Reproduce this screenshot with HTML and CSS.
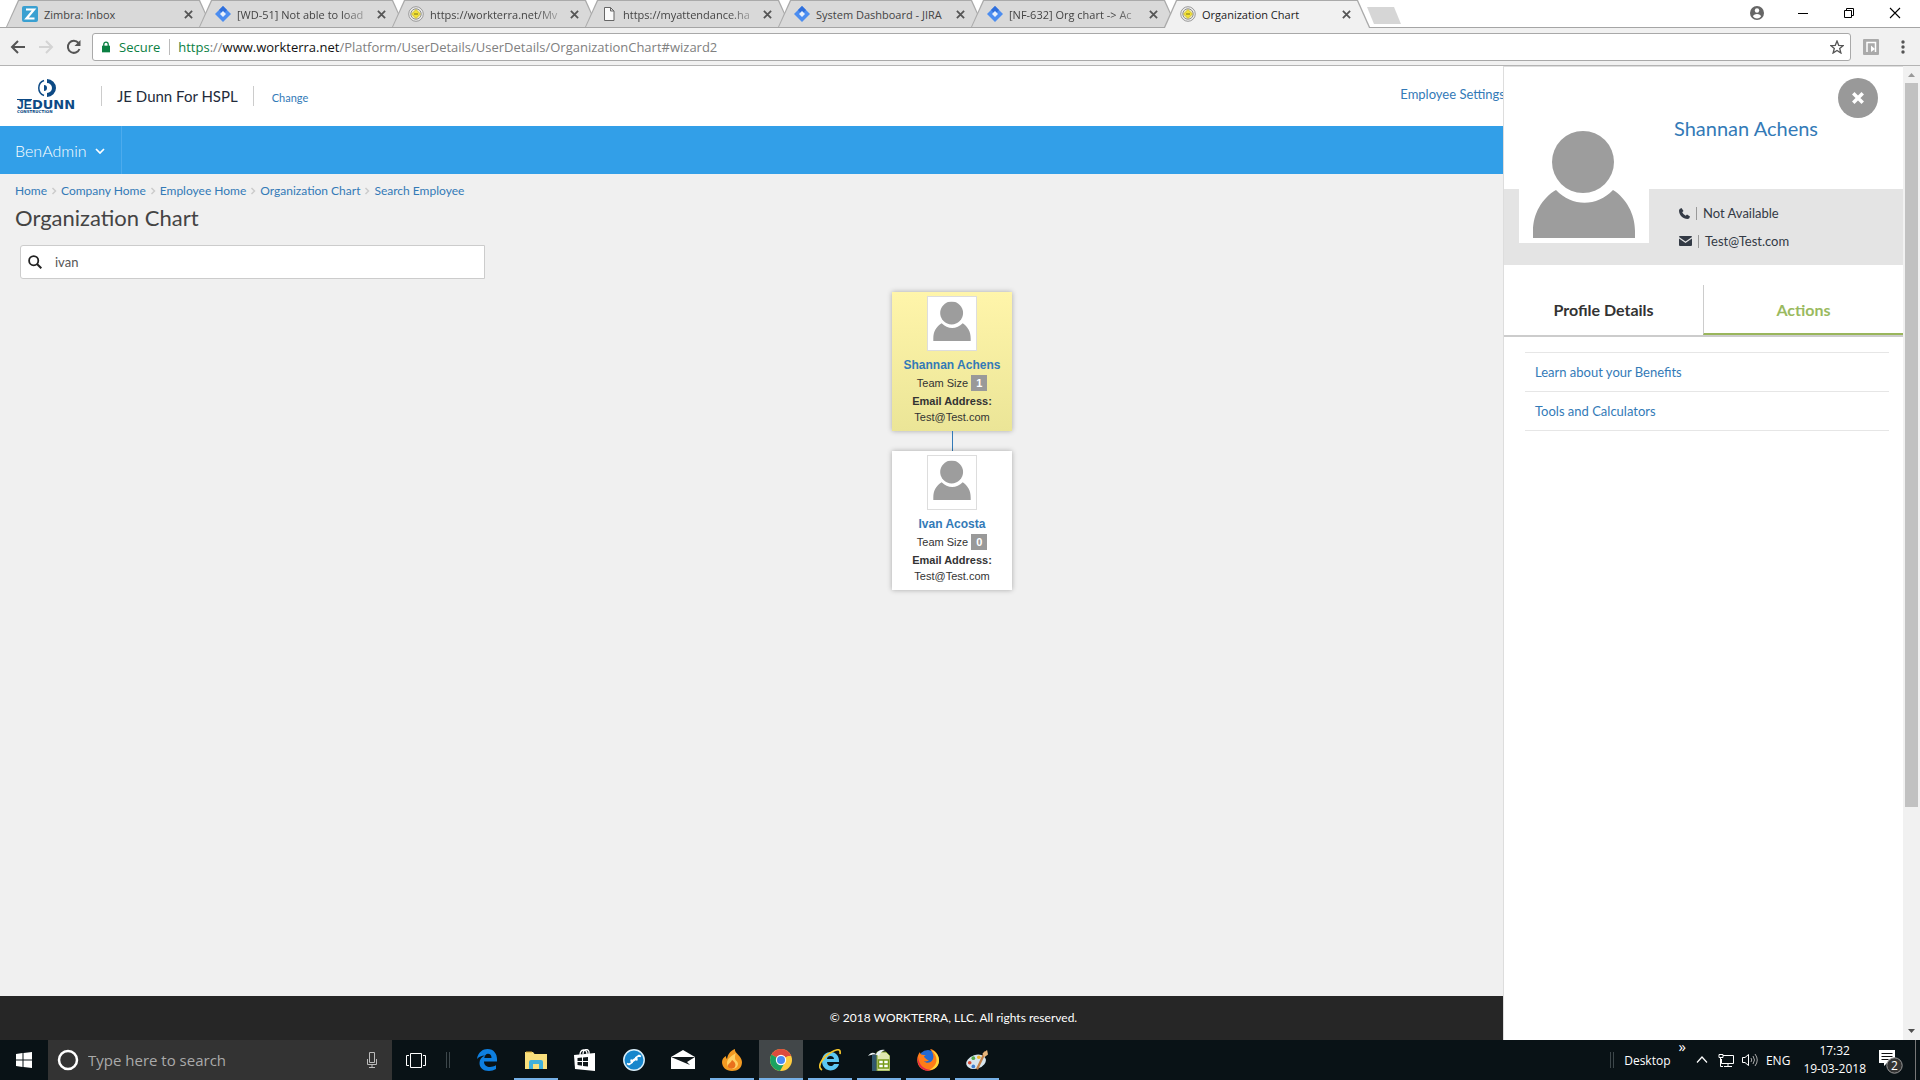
FILE: index.html
```html
<!DOCTYPE html>
<html lang="en">
<head>
<meta charset="utf-8">
<title>Organization Chart</title>
<link rel="stylesheet" href="styles.css">
</head>
<body>
<svg class="defs" aria-hidden="true">
  <symbol id="jira" viewBox="0 0 16 16"><path d="M8 0l8 8-8 8-8-8z" fill="#4c8df0"/><path d="M8 0l4 4-4 4-4-4z" fill="#2f6fdc"/><path d="M8 5l3 3-3 3-3-3z" fill="#e8f0fc"/></symbol>
  <symbol id="wt" viewBox="0 0 16 16"><circle cx="8" cy="8" r="7.3" fill="#eee" stroke="#999" stroke-width="1"/><circle cx="8" cy="8" r="5.2" fill="#f4efc0" stroke="#8d8d8d"/><path d="M8 3.500l4.500 4.500-4.500 4.500L3.500 8z" fill="#f3e233" stroke="#b5a52a" stroke-width=".6"/><path d="M6 8h4" stroke="#77701e"/></symbol>
  <symbol id="doc" viewBox="0 0 16 16"><path d="M3.500 1.500h6l3.500 3.500v9.500H3.500zM9.500 1.500V5H13" fill="#fafafa" stroke="#666"/></symbol>
  <symbol id="x" viewBox="0 0 10 10"><path d="M1 1l8 8M9 1L1 9" stroke="#555" stroke-width="2"/></symbol>
  <symbol id="person" viewBox="0 0 102 107"><circle cx="50" cy="31" r="31" fill="#9d9d9d"/><path d="M0 107V100C0 83 9 67 23 59C39 76 64 76 80 59C93 67 102 83 102 100V107z" fill="#9d9d9d"/></symbol>
  <symbol id="crumb" viewBox="0 0 6 8"><path d="M1.500 1l3 3-3 3" fill="none" stroke="#ccc" stroke-width="1.500"/></symbol>
</svg>

<header class="browser">
  <div class="tabstrip">
    <div class="tab"><svg viewBox="0 0 16 16"><rect width="16" height="16" rx="2" fill="#3aa0d1"/><path d="M4 3.500h8L4.500 12.500H12.500" fill="none" stroke="#fff" stroke-width="2.200"/></svg><span>Zimbra: Inbox</span><button aria-label="Close tab"><svg><use href="#x"/></svg></button></div>
    <div class="tab"><svg><use href="#jira"/></svg><span class="fade">[WD-51] Not able to load</span><button aria-label="Close tab"><svg><use href="#x"/></svg></button></div>
    <div class="tab"><svg><use href="#wt"/></svg><span class="fade">https://workterra.net/Mv</span><button aria-label="Close tab"><svg><use href="#x"/></svg></button></div>
    <div class="tab"><svg><use href="#doc"/></svg><span class="fade">https://myattendance.ha</span><button aria-label="Close tab"><svg><use href="#x"/></svg></button></div>
    <div class="tab"><svg><use href="#jira"/></svg><span>System Dashboard - JIRA</span><button aria-label="Close tab"><svg><use href="#x"/></svg></button></div>
    <div class="tab"><svg><use href="#jira"/></svg><span class="fade">[NF-632] Org chart -&gt; Ac</span><button aria-label="Close tab"><svg><use href="#x"/></svg></button></div>
    <div class="tab active"><svg><use href="#wt"/></svg><span>Organization Chart</span><button aria-label="Close tab"><svg><use href="#x"/></svg></button></div>
    <button class="newtab" aria-label="New tab"></button>
    <div class="winbtns">
      <button aria-label="Profile"><svg viewBox="0 0 14 14"><circle cx="7" cy="7" r="7" fill="#666"/><circle cx="7" cy="4.500" r="2.200" fill="#fff"/><path d="M3 10.500c0-3.500 8-3.500 8 0a5 5 0 0 1-8 0" fill="#fff"/></svg></button>
      <button aria-label="Minimize"><svg viewBox="0 0 14 14"><path d="M2 7.500h10" stroke="#000"/></svg></button>
      <button aria-label="Restore"><svg viewBox="0 0 14 14"><path d="M2.500 4.500h7v7h-7zM4.500 4.500v-2h7v7h-2" fill="none" stroke="#000"/></svg></button>
      <button aria-label="Close"><svg viewBox="0 0 14 14"><path d="M2 2l10 10M12 2L2 12" stroke="#000" stroke-width="1.100"/></svg></button>
    </div>
  </div>
  <div class="toolbar">
    <button aria-label="Back"><svg viewBox="0 0 16 16"><path d="M15 8H2M8 2L2 8l6 6" fill="none" stroke="#555" stroke-width="2"/></svg></button>
    <button aria-label="Forward"><svg viewBox="0 0 16 16"><path d="M1 8h13M8 2l6 6-6 6" fill="none" stroke="#d4d4d4" stroke-width="2"/></svg></button>
    <button aria-label="Reload"><svg viewBox="0 0 16 16"><path d="M13.500 10A6 6 0 1 1 12.500 4" fill="none" stroke="#555" stroke-width="2"/><path d="M14.500 1v6h-6z" fill="#555"/></svg></button>
    <div class="omnibox">
      <svg class="lock" viewBox="0 0 9 12"><path d="M0 4.500h9V12H0z" fill="#0b8043"/><path d="M2 5V3a2.500 2.500 0 0 1 5 0v2" fill="none" stroke="#0b8043" stroke-width="1.500"/></svg>
      <span class="secure">Secure</span>
      <span class="url"><i>https</i>://<b>www.workterra.net</b>/Platform/UserDetails/UserDetails/OrganizationChart#wizard2</span>
      <button aria-label="Bookmark"><svg viewBox="0 0 14 14"><path d="M7 1l1.700 4.300 4.500.3-3.500 2.900 1.200 4.500L7 10.500 3.100 13l1.200-4.500L.8 5.600l4.500-.3z" fill="none" stroke="#555" stroke-width="1.300"/></svg></button>
    </div>
    <button class="ext" aria-label="Extension"><svg viewBox="0 0 16 16"><rect width="16" height="16" rx="1" fill="#aaa"/><path d="M4 13V3.500h8.500V13" fill="none" stroke="#fff" stroke-width="1.500"/><path d="M8 6.500l4 3.500-4 3z" fill="#fff"/></svg></button>
    <button aria-label="Menu"><svg viewBox="0 0 16 16" fill="#555"><circle cx="8" cy="3" r="1.700"/><circle cx="8" cy="8" r="1.700"/><circle cx="8" cy="13" r="1.700"/></svg></button>
  </div>
</header>

<div class="viewport">
  <div class="page">
    <div class="brandbar">
      <svg class="logo" viewBox="0 0 64 34" role="img" aria-label="JE Dunn Construction">
        <path d="M28 1.500a8 8 0 0 0 0 15" fill="none" stroke="#0d4a85" stroke-width="1.500"/>
        <path d="M31 0a8.800 8.800 0 0 1 0 18v-4a5 5 0 0 0 0-10z" fill="#0d4a85"/><path d="M28 6a3 3 0 0 1 0 6z" fill="#0d4a85"/>
        <path d="M1 20.500h15" stroke="#0d4a85"/>
        <text x="1" y="30" class="logo-je">JE</text><text x="16" y="30" class="logo-dunn">DUNN</text>
        <text x="1" y="34" class="logo-sub">CONSTRUCTION</text>
      </svg>
      <span class="company">JE Dunn For HSPL</span>
      <a class="change" href="#">Change</a>
      <a class="settings" href="#">Employee Settings</a>
    </div>
    <nav class="mainnav"><button>BenAdmin <svg viewBox="0 0 10 6"><path d="M1 1l4 4 4-4" fill="none" stroke="#fff" stroke-width="1.700"/></svg></button></nav>
    <main>
      <nav class="crumbs">
        <a href="#">Home</a><svg><use href="#crumb"/></svg><a href="#">Company Home</a><svg><use href="#crumb"/></svg><a href="#">Employee Home</a><svg><use href="#crumb"/></svg><a href="#">Organization Chart</a><svg><use href="#crumb"/></svg><a href="#">Search Employee</a>
      </nav>
      <h1>Organization Chart</h1>
      <label class="search"><svg viewBox="0 0 14 14"><circle cx="5.700" cy="5.700" r="4.600" fill="none" stroke="#222" stroke-width="1.800"/><path d="M9 9l4.300 4.300" stroke="#222" stroke-width="2"/></svg><input type="text" value="ivan" aria-label="Search employee"></label>
      <div class="chart">
        <article class="card selected">
          <svg class="photo" viewBox="-14 -12 130 143"><use href="#person" width="102" height="107"/></svg>
          <a href="#">Shannan Achens</a>
          <p class="team">Team Size <span>1</span></p>
          <p><b>Email Address:</b></p>
          <p>Test@Test.com</p>
        </article>
        <div class="link"></div>
        <article class="card">
          <svg class="photo" viewBox="-14 -12 130 143"><use href="#person" width="102" height="107"/></svg>
          <a href="#">Ivan Acosta</a>
          <p class="team">Team Size <span>0</span></p>
          <p><b>Email Address:</b></p>
          <p>Test@Test.com</p>
        </article>
      </div>
    </main>
    <footer>© 2018 WORKTERRA, LLC. All rights reserved.</footer>

    <aside class="panel">
      <button class="dismiss" aria-label="Close panel"><svg viewBox="0 0 12 12"><path d="M2.500 2.500l7 7M9.500 2.500l-7 7" stroke="#fff" stroke-width="3.500" stroke-linecap="square"/></svg></button>
      <div class="profile">
        <svg class="avatar" viewBox="-14 -7 130 119"><use href="#person" width="102" height="107"/></svg>
        <h2>Shannan Achens</h2>
        <div class="contact">
          <p><svg class="phone" viewBox="0 0 11 11"><path d="M2.500 0L4.500 3 3.200 4.300q1 2.300 3.500 3.500L8 6.500l3 2q-.5 2.500-2.500 2.500C4 11 0 7 0 2.500Q0 .5 2.500 0z" fill="#333a45"/></svg><i></i>Not Available</p>
          <p><svg class="mail" viewBox="0 0 13 10"><path d="M1 0h11q1 0 1 1L6.500 5.500 0 1q0-1 1-1M0 2.500l6.500 4.500L13 2.500V9q0 1-1 1H1Q0 10 0 9z" fill="#333a45"/></svg><i></i>Test@Test.com</p>
        </div>
      </div>
      <div class="tabs"><button>Profile Details</button><button class="on">Actions</button></div>
      <ul><li><a href="#">Learn about your Benefits</a></li><li><a href="#">Tools and Calculators</a></li></ul>
    </aside>
  </div>
  <div class="scrollbar"><svg viewBox="0 0 7 4"><path d="M0 4l3.500-4L7 4z" fill="#999"/></svg><div class="track"><div class="thumb"></div></div><svg viewBox="0 0 7 4"><path d="M0 0l3.500 4L7 0z" fill="#505050"/></svg></div>
</div>

<div class="taskbar">
  <button class="start" aria-label="Start"><svg viewBox="0 0 16 16" fill="#fff"><path d="M0 2l6.500-1v6.500H0zM7.500.9L16 0v7.500H7.500zM0 8.500h6.500V15L0 14zM7.500 8.500H16V16l-8.500-1z"/></svg></button>
  <label class="cortana"><svg viewBox="0 0 22 22"><circle cx="11" cy="11" r="9" fill="none" stroke="#fff" stroke-width="2.500"/></svg><input type="text" placeholder="Type here to search" aria-label="Type here to search"><svg class="mic" viewBox="0 0 12 18"><path d="M3.500 1.500h5v10h-5zM1.500 8v5.500h9V8M6 13.500v3M3 16.500h6" fill="none" stroke="#bbb"/></svg></label>
  <button class="view" aria-label="Task view"><svg viewBox="0 0 20 15"><path d="M4.500.5h11v14h-11zM3 2.500H.5v10H3M17 2.500h2.500v10H17" fill="none" stroke="#fff"/></svg></button>
  <div class="grip"></div>
  <div class="apps">
    <button aria-label="Edge"><svg viewBox="0 0 22 22"><path d="M1 10C2 3 7 0 11.500 0 18 0 21 5 21 10v2.500H8c0 4 3 5.500 6 5.500 2 0 4-.5 6-1.700V20c-2 1.300-4.500 2-7 2-6 0-9.500-3.500-9.500-8C3.500 10.500 5.500 8 9 6.500 5.500 6.500 3 8 1 10zM8.300 9H15.500C15.500 6 14 4.700 12 4.700S8.700 6.500 8.300 9z" fill="#0e7fe0"/></svg></button>
    <button class="open" aria-label="File Explorer"><svg viewBox="0 0 22 22"><path d="M0 3h8l1.500 2H22v15H0z" fill="#f9df7c"/><path d="M1 3h6" stroke="#d9a62e"/><path d="M4 20v-7q0-2 2-2h10q2 0 2 2v7h-4v-5H8v5z" fill="#3fb0dc"/></svg></button>
    <button aria-label="Store"><svg viewBox="0 0 22 22"><path d="M0 6l21-2v18L1 20z" fill="#fff"/><path d="M6 6c0-6 7-7 7-1M9 5c0-6 7-6 6 0" fill="none" stroke="#fff" stroke-width="1.300"/><path d="M3.500 9l4.500-.5V12H3.500zM9 8.400l5-.5V12H9zM3.500 13H8v3.700L3.500 16zM9 13h5v4.500L9 17z" fill="#10171a"/></svg></button>
    <button aria-label="Support tool"><svg viewBox="0 0 22 22"><circle cx="11" cy="11" r="10.200" fill="#1786cc" stroke="#d8eefa" stroke-width="1.500"/><path d="M8 13l6-4" stroke="#fff" stroke-width="2.500"/><path d="M8 10.500l1 3-3 2-2-1M14 11.500l-1-3 3-2 2 1" fill="none" stroke="#fff" stroke-width="1.800"/></svg></button>
    <button aria-label="Mail"><svg class="wide" viewBox="0 0 24 22"><path d="M0 8l12-7 12 7v12H0z" fill="#fff"/><path d="M0 8h24l-8 5 3 3L0 8" fill="#10171a"/></svg></button>
    <button class="open" aria-label="Candy"><svg viewBox="0 0 22 22"><path d="M14 0c-1 4 7 7 7 13 0 6-4 9-10 9-6 0-10-4-10-9 0-3 2-5 4-6 0 1 0 2 1 3C7 5 9 2 14 0z" fill="#f29a22"/><path d="M15 4c-5 3-9 6-9 10 0 3 2 6 5 6s6-2 6-5-3-3-3-6c0-2 0-3 1-5z" fill="#ffcf62"/><path d="M11 11c3 2 5 5 2 8-2 1-5 1-6-1-1-3 3-4 4-7z" fill="#e9701d"/></svg></button>
    <button class="open current" aria-label="Chrome"><svg viewBox="0 0 22 22"><circle cx="11" cy="11" r="11" fill="#ffcd40"/><path d="M11 11L1.500 5.500a11 11 0 0 1 19 0z" fill="#dd4b3e"/><path d="M1.500 5.500a11 11 0 0 0 8.500 16.400L15 13 11 11z" fill="#1aa261"/><path d="M11 5.500h9.500a11 11 0 0 1 .5 1.500H11z" fill="#dd4b3e"/><circle cx="11" cy="11" r="5.200" fill="#fff"/><circle cx="11" cy="11" r="4" fill="#4a8af4"/></svg></button>
    <button class="open" aria-label="Internet Explorer"><svg viewBox="0 0 22 22"><path d="M20 13H8c0 5 6 5 7 2h5c-2 9-17 9-17-3C3 0 21 0 20 13zM8 10h7c0-4-7-4-7 0z" fill="#5cc8f3"/><path d="M3 21C-3 18 4 8 11 4s11-5 10 1" fill="none" stroke="#f3c52c" stroke-width="1.700"/></svg></button>
    <button class="open" aria-label="OpenOffice"><svg viewBox="0 0 22 22"><path d="M4 6h12v16H4z" fill="#31566d"/><path d="M9 3h9l4 4v15H9z" fill="#dfe8b0" stroke="#7f9c2b"/><path d="M0 7c3-4 5-4 8-2 2-4 6-5 9-4-3 1-5 3-6 6-3-2-6-2-11 0z" fill="#e9f1f3"/><path d="M10.500 11h10v8h-10z" fill="#fff" stroke="#789a1b" stroke-width="1.500"/><path d="M15.500 11v8M10 15h11" stroke="#789a1b" stroke-width="1.500"/></svg></button>
    <button class="open" aria-label="Firefox"><svg viewBox="0 0 22 22"><circle cx="11" cy="11" r="10" fill="#2269d2"/><path d="M3 3C-1 8-1 16 5 20s17 1 17-9C22 5 17 0 13 0c3 3 4 7 3 10-1 4-7 5-9 2 2 1 4 0 5-1-3 0-3-2-5-3 0-1 1-2 2-2C6 6 3 6 3 3z" fill="#ff7d18"/><path d="M14 1c9 7 6 17-2 20 12 0 14-16 2-20z" fill="#ffd83b"/><path d="M1 8c-2 9 6 16 13 13C6 20 2 16 1 8z" fill="#e5294a"/></svg></button>
    <button class="open" aria-label="Paint"><svg viewBox="0 0 24 22"><ellipse cx="11" cy="13" rx="11" ry="7.500" transform="rotate(-18 11 13)" fill="#d7e5ee"/><circle cx="4" cy="14" r="2" fill="#d64a37"/><circle cx="8" cy="9" r="2" fill="#55a947"/><circle cx="14" cy="8" r="2" fill="#f0b52f"/><circle cx="8" cy="18" r="2" fill="#3f7fd0"/><path d="M12 21l9-19" stroke="#c2814a" stroke-width="2.500"/><path d="M18 4l5-4 1 5-4 3z" fill="#e7b57b"/></svg></button>
  </div>
  <div class="tray">
    <div class="grip"></div>
    <span class="desk">Desktop</span><span class="more">»</span>
    <svg viewBox="0 0 16 16"><path d="M3 10.500L8 5l5 5.500" fill="none" stroke="#fff" stroke-width="1.200"/></svg>
    <svg viewBox="0 0 16 16"><path d="M5 3.500h10.500v8H3.500V7M10 11.500V14M6 14.500h8M1 2.500h4v3H1zM2.500 6v8.500H5" fill="none" stroke="#fff"/></svg>
    <svg viewBox="0 0 16 16"><path d="M.5 5.500H3l3.500-3v11L3 10.500H.5z" fill="none" stroke="#fff"/><path d="M9 6q1.500 2 0 4M11 4q3 4 0 8M13 2q4.500 6 0 12" fill="none" stroke="#aaa"/></svg>
    <span class="lang">ENG</span>
    <time><span>17:32</span><span>19-03-2018</span></time>
    <button class="notice" aria-label="2 notifications"><svg viewBox="0 0 24 24"><path d="M0 0h16v13H8l-3 3v-3H0z" fill="#fff"/><path d="M2.500 3.500h11M2.500 6.500h11M2.500 9.500h7" stroke="#111"/><circle cx="15.500" cy="15.500" r="7.700" fill="#333" stroke="#999"/></svg><span>2</span></button>
  </div>
</div>
</body>
</html>
```
FILE: styles.css
```css
* { box-sizing: border-box; }
html, body { height: 100%; }
body { margin: 0; display: flex; flex-direction: column; overflow: hidden; font-family: Lato, sans-serif; color: #333; background: #f0f0f0; }
button { border: 0; padding: 0; margin: 0; background: none; font: inherit; color: inherit; display: flex; align-items: center; justify-content: center; }
p, h1, h2, ul { margin: 0; padding: 0; font-weight: 400; }
a { color: #337ab7; text-decoration: none; }
svg { display: block; flex: none; }
input { border: 0; padding: 0; background: none; font: inherit; color: inherit; outline: 0; min-width: 0; }
.defs { position: absolute; width: 0; height: 0; }

/* browser window */
.browser { flex: none; font-family: "Open Sans", sans-serif; background: #fff; }
.tabstrip { height: 28px; display: flex; padding-left: 6px; border-bottom: 1px solid #a5a5a5; }
.tab { position: relative; width: 206px; margin-right: -13px; height: 28px; padding: 0 16px; display: flex; align-items: center; font-size: 11px; color: #444; z-index: 0; }
.tab::before, .tab::after { content: ""; position: absolute; inset: 0; z-index: -1; background: #aaa; clip-path: polygon(0 27px, 12px 0, 194px 0, 100% 27px); }
.tab::after { background: #d9d9d9; clip-path: polygon(1px 27px, 13px 1px, 193px 1px, 205px 27px); }
.tab.active { color: #222; }
.tab.active::after { background: #f1f1f1; clip-path: polygon(1px 100%, 13px 1px, 193px 1px, 205px 100%); }
.tab > svg { width: 16px; height: 16px; }
.tab > span { width: 136px; margin-left: 6px; white-space: nowrap; }
.tab > .fade { -webkit-mask-image: linear-gradient(to right, #000 105px, transparent 140px); mask-image: linear-gradient(to right, #000 105px, transparent 140px); }
.tab button svg { width: 9px; height: 9px; }
.tab button { margin-left: 4px; }
.newtab { width: 34px; height: 17px; margin: 7px 0 0 10px; background: #d6d6d6; clip-path: polygon(0 0, 27px 0, 100% 100%, 7px 100%); }
.winbtns { margin-left: auto; display: flex; gap: 16px; padding-right: 10px; }
.winbtns button { width: 30px; height: 26px; }
.winbtns svg { width: 14px; height: 14px; }
.toolbar { height: 38px; display: flex; align-items: center; gap: 12px; padding: 0 9px 0 10px; background: #f1f1f1; border-bottom: 1px solid #b4b4b4; }
.toolbar > button svg { width: 16px; height: 16px; }
.omnibox { flex: 1; height: 28px; display: flex; align-items: center; padding: 0 6px 0 9px; margin: 0 0 0 -2px; background: #fff; border: 1px solid #a9a9a9; border-radius: 3px; font-size: 13px; }
.ext { margin-right: 4px; }
.lock { width: 8px; height: 12px; }
.secure { color: #0b8043; margin-left: 9px; padding-right: 9px; border-right: 1px solid #bbb; line-height: 16px; }
.url { margin-left: 8px; color: #808080; flex: 1; }
.url i { font-style: normal; color: #0b8043; }
.url b { font-weight: 400; color: #111; }
.omnibox button svg { width: 14px; height: 14px; }

/* web page */
.viewport { flex: 1; display: flex; min-height: 0; }
.page { position: relative; flex: 1; display: flex; flex-direction: column; min-width: 0; overflow: hidden; }
.brandbar { height: 60px; display: flex; align-items: center; background: #fff; padding: 0 400px 0 16px; overflow: hidden; }
.logo { width: 64px; height: 34px; margin-top: -1px; }
.logo-je { font: bold 12px "Liberation Sans", sans-serif; fill: #0d4a85; }
.logo-dunn { font: bold 13px "DejaVu Sans", sans-serif; fill: #0d4a85; }
.logo-sub { font: bold 4px "DejaVu Sans", sans-serif; fill: #0d4a85; }
.company { margin-left: 21px; padding: 0 15px; border: solid #ccc; border-width: 0 1px; font-size: 15px; line-height: 20px; color: #222b3a; }
.change { margin: 2px 0 0 18px; font-size: 11px; }
.settings { margin: 0 -2px 5px auto; font-size: 13px; }
.mainnav { height: 48px; background: #329fe8; color: #fff; display: flex; }
.mainnav button { padding: 0 16px 0 15px; gap: 8px; font-size: 16px; font-weight: 300; border-right: 1px solid #4cabed; }
.mainnav svg { width: 10px; height: 6px; margin-top: 2px; }
main { flex: 1; padding: 9px 0 0 15px; }
.crumbs { display: flex; align-items: center; gap: 4px; font-size: 12px; line-height: 16px; }
.crumbs svg { width: 6px; height: 8px; }
h1 { font-size: 22px; line-height: 28px; margin: 5px 0 13px; color: #444; }
.search { display: flex; align-items: center; width: 465px; height: 34px; margin-left: 5px; padding-left: 7px; gap: 13px; background: #fff; border: 1px solid #ccc; border-radius: 3px 0 0 3px; font-size: 13px; color: #555; }
.search svg { width: 14px; height: 14px; }
.search input { flex: 1; }
.chart { margin: 13px 0 0 -14px; display: flex; flex-direction: column; align-items: center; font-family: "Liberation Sans", Arial, sans-serif; }
.card { width: 120px; height: 139px; padding-top: 4px; background: #fff; box-shadow: 0 0 5px rgba(0,0,0,.3); display: flex; flex-direction: column; align-items: center; font-size: 11px; line-height: 16px; color: #333; }
.card.selected { background: linear-gradient(#fff5aa, #ebe597); }
.photo { width: 50px; height: 55px; background: #fff; border: 1px solid #ddd; }
.card a { font-size: 12px; font-weight: 700; line-height: 18px; margin-top: 5px; }
.team { margin-bottom: 1px; line-height: 18px; }
.team span { display: inline-block; width: 16px; line-height: 16px; background: #999; color: #fff; font-weight: 700; text-align: center; }
.link { width: 1px; height: 20px; background: #337ab7; }
footer { height: 44px; padding-left: 4px; background: #262626; color: #fff; font-size: 12px; line-height: 44px; text-align: center; }

/* employee drawer, slides over the page */
.panel { position: absolute; top: 0; right: 0; bottom: 0; width: 400px; background: #fff; border: solid #ddd; border-width: 1px 0 0 1px; }
.dismiss { position: absolute; top: 11px; right: 25px; width: 40px; height: 40px; border-radius: 50%; background: #999; }
.dismiss svg { width: 12px; height: 12px; }
.profile { display: grid; grid-template-columns: 130px 1fr; grid-template-rows: 122px 76px; column-gap: 25px; padding-left: 15px; background: linear-gradient(#fff 122px, #e4e4e4 122px); }
.avatar { grid-row: 1 / 3; width: 130px; height: 119px; margin-top: 57px; background: #fff; }
.profile h2 { font-size: 20px; line-height: 24px; color: #337ab7; padding-top: 49px; }
.contact { padding: 14px 0 0 5px; font-size: 13px; line-height: 20px; display: grid; gap: 8px; align-content: start; }
.contact p { display: flex; align-items: center; color: #333a45; }
.contact i { width: 1px; height: 13px; margin: 0 6px; background: #999; }
.phone { width: 11px; height: 11px; }
.mail { width: 13px; height: 10px; }
.tabs { display: flex; margin-top: 20px; border-bottom: 2px solid #ccc; font-size: 16px; font-weight: 700; }
.tabs button { flex: 1; height: 50px; padding-bottom: 2px; }
.tabs .on { color: #9aba5f; border-left: 1px solid #ccc; border-bottom: 2px solid #9ab65c; padding-bottom: 0; }
.panel ul { list-style: none; margin: 15px 14px 0 21px; border-top: 1px solid #e6e6e6; font-size: 13px; }
.panel li { border-bottom: 1px solid #e6e6e6; line-height: 38px; padding-left: 10px; }
.scrollbar { width: 17px; background: #f1f1f1; display: flex; flex-direction: column; align-items: center; padding: 7px 0; gap: 6px; }
.scrollbar svg { width: 7px; height: 4px; }
.track { flex: 1; width: 13px; }
.thumb { height: 77%; background: #c1c1c1; }

/* desktop taskbar */
.taskbar { flex: none; height: 40px; display: flex; align-items: center; background: #091216; color: #fff; font-family: "Open Sans", sans-serif; font-size: 12px; }
.start { width: 48px; height: 40px; }
.start svg { width: 16px; height: 16px; }
.cortana { width: 344px; height: 40px; display: flex; align-items: center; padding: 0 14px 0 9px; gap: 9px; background: #333; color: #aaa; font-size: 15px; }
.cortana svg { width: 22px; height: 22px; }
.cortana input { flex: 1; }
.cortana input::placeholder { color: #aaa; opacity: 1; }
.cortana .mic { width: 12px; height: 18px; }
.view { width: 48px; height: 40px; }
.view svg { width: 20px; height: 15px; }
.grip { width: 4px; height: 16px; border: solid #3d474b; border-width: 0 1px; margin-left: 6px; }
.apps { display: flex; gap: 5px; margin-left: 15px; }
.apps button { width: 44px; height: 40px; padding-top: 2px; border-bottom: 2px solid transparent; background-clip: padding-box; }
.apps .open { border-bottom-color: #76b0e6; }
.apps .current { background-color: #424749; }
.apps svg { width: 22px; height: 22px; }
.apps .wide { width: 24px; }
.tray { margin-left: auto; display: flex; align-items: center; gap: 8px; padding-right: 4px; }
.tray > svg { width: 16px; height: 16px; }
.desk { margin-left: 2px; }
.more { align-self: flex-start; font-size: 15px; line-height: 12px; }
time { display: grid; text-align: center; line-height: 18px; margin-left: 5px; }
.notice { position: relative; margin-left: 5px; padding-right: 12px; border-right: 1px solid #777; height: 40px; }
.notice svg { width: 24px; height: 24px; margin-top: 4px; }
.notice span { position: absolute; left: 12px; top: 18px; line-height: 16px; }
```
